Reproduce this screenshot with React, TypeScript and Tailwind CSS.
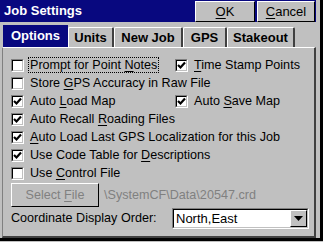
import React from 'react';

const font = { fontFamily: '"Liberation Sans", Arial, sans-serif' };

// access-key underline
const U = ({ children }: { children: React.ReactNode }) => <span className="underline underline-offset-2">{children}</span>;

const CheckBox = ({ checked }: { checked: boolean }) => (
  <div className="w-[13px] h-[13px] shrink-0 border border-t-[#808080] border-l-[#808080] border-b-white border-r-white">
    <div className="w-full h-full bg-white border border-t-black border-l-black border-b-[#c0c0c0] border-r-[#c0c0c0] flex items-center justify-center">
      {checked && (
        <svg width="9" height="9" viewBox="0 0 9 9">
          <polyline points="1,4 3.5,6.5 8,1.5" fill="none" stroke="black" strokeWidth="2.2" />
        </svg>
      )}
    </div>
  </div>
);

const Row = ({ checked, children, focus }: { checked: boolean; children: React.ReactNode; focus?: boolean }) => (
  <div className="flex items-center gap-[5px] h-[18px]">
    <CheckBox checked={checked} />
    <span className={`leading-[14px] px-px ${focus ? 'outline outline-1 outline-dotted outline-black' : ''}`}>{children}</span>
  </div>
);

const tabs = [
  { label: 'Units', w: 'w-[46px]' },
  { label: 'New Job', w: 'w-[69px]' },
  { label: 'GPS', w: 'w-[44px]' },
  { label: 'Stakeout', w: 'w-[68px]' },
];

export default function App() {
  return (
    <div className="w-[323px] h-[242px] bg-[#c0c0c0] text-black text-[12.6px] overflow-hidden flex flex-col" style={font}>
      <div className="flex h-[238px]">
        <div className="w-[316px] flex flex-col">
          {/* title bar */}
          <div className="h-[22px] bg-[#08087f] flex items-center pl-[4px] pr-px">
            <span className="text-white font-bold text-[13px] flex-1">Job Settings</span>
            <div className="flex gap-[2px] h-[21px] mt-px">
              <button className="w-[60px] bg-[#c0c0c0] border border-t-white border-l-white border-b-black border-r-black text-[13px]">
                <U>O</U>K
              </button>
              <button className="w-[58px] bg-[#c0c0c0] border border-t-white border-l-white border-b-black border-r-black text-[13px]">
                <U>C</U>ancel
              </button>
            </div>
          </div>
          {/* tabs */}
          <div className="h-[25px] flex items-end pl-[3px] font-bold text-[13px]">
            <div className="w-[65px] h-[22px] bg-[#08087f] text-white flex items-center justify-center">Options</div>
            {tabs.map(t => (
              <div
                key={t.label}
                className={`${t.w} h-[20px] flex items-center justify-center border-t border-l border-t-white border-l-white border-r-2 border-r-[#404040] rounded-t-[2px]`}
              >
                {t.label}
              </div>
            ))}
          </div>
          {/* panel */}
          <div className="flex-1 ml-[2px] border-l border-l-[#808080] border-t border-t-white border-r-2 border-r-[#404040] border-b-2 border-b-[#404040] pl-[8px] pt-[8px] flex flex-col">
            <div className="flex">
              <div className="w-[164px]">
                <Row checked={false} focus>Prompt for Point <U>N</U>otes</Row>
              </div>
              <Row checked><U>T</U>ime Stamp Points</Row>
            </div>
            <Row checked={false}>Store <U>G</U>PS Accuracy in Raw File</Row>
            <div className="flex">
              <div className="w-[164px]">
                <Row checked>Auto <U>L</U>oad Map</Row>
              </div>
              <Row checked>Auto <U>S</U>ave Map</Row>
            </div>
            <Row checked>Auto Recall <U>R</U>oading Files</Row>
            <Row checked><U>A</U>uto Load Last GPS Localization for this Job</Row>
            <Row checked>Use Code Table for <U>D</U>escriptions</Row>
            <Row checked={false}>Use <U>C</U>ontrol File</Row>
            <div className="flex items-center mt-px gap-[5px]">
              <div className="w-[88px] h-[24px] border border-t-white border-l-white border-b-black border-r-black flex items-center justify-center text-[#808080]">
                <span>Select{' '}<U>F</U>ile</span>
              </div>
              <span className="text-[#808080]">\SystemCF\Data\20547.crd</span>
            </div>
            <div className="flex items-center mt-px">
              <span className="w-[161px]">Coordinate Display Order:</span>
              <div className="w-[137px] h-[21px] border border-t-[#808080] border-l-[#808080] border-b-white border-r-white">
                <div className="h-full bg-white border border-t-black border-l-black border-b-[#c0c0c0] border-r-[#c0c0c0] flex items-center">
                  <span className="flex-1 pl-[2px] text-[13px]">North,East</span>
                  <div className="w-[17px] h-[17px] bg-[#c0c0c0] border border-t-white border-l-white border-b-black border-r-black flex items-center justify-center">
                    <svg width="9" height="5" viewBox="0 0 9 5"><polygon points="0,0 9,0 4.5,5" fill="black" /></svg>
                  </div>
                </div>
              </div>
            </div>
          </div>
        </div>
        {/* right frame */}
        <div className="w-[7px] flex">
          <div className="w-[4px]" />
          <div className="w-[3px] bg-black" />
        </div>
      </div>
      <div className="h-[3px] bg-black" />
    </div>
  );
}
